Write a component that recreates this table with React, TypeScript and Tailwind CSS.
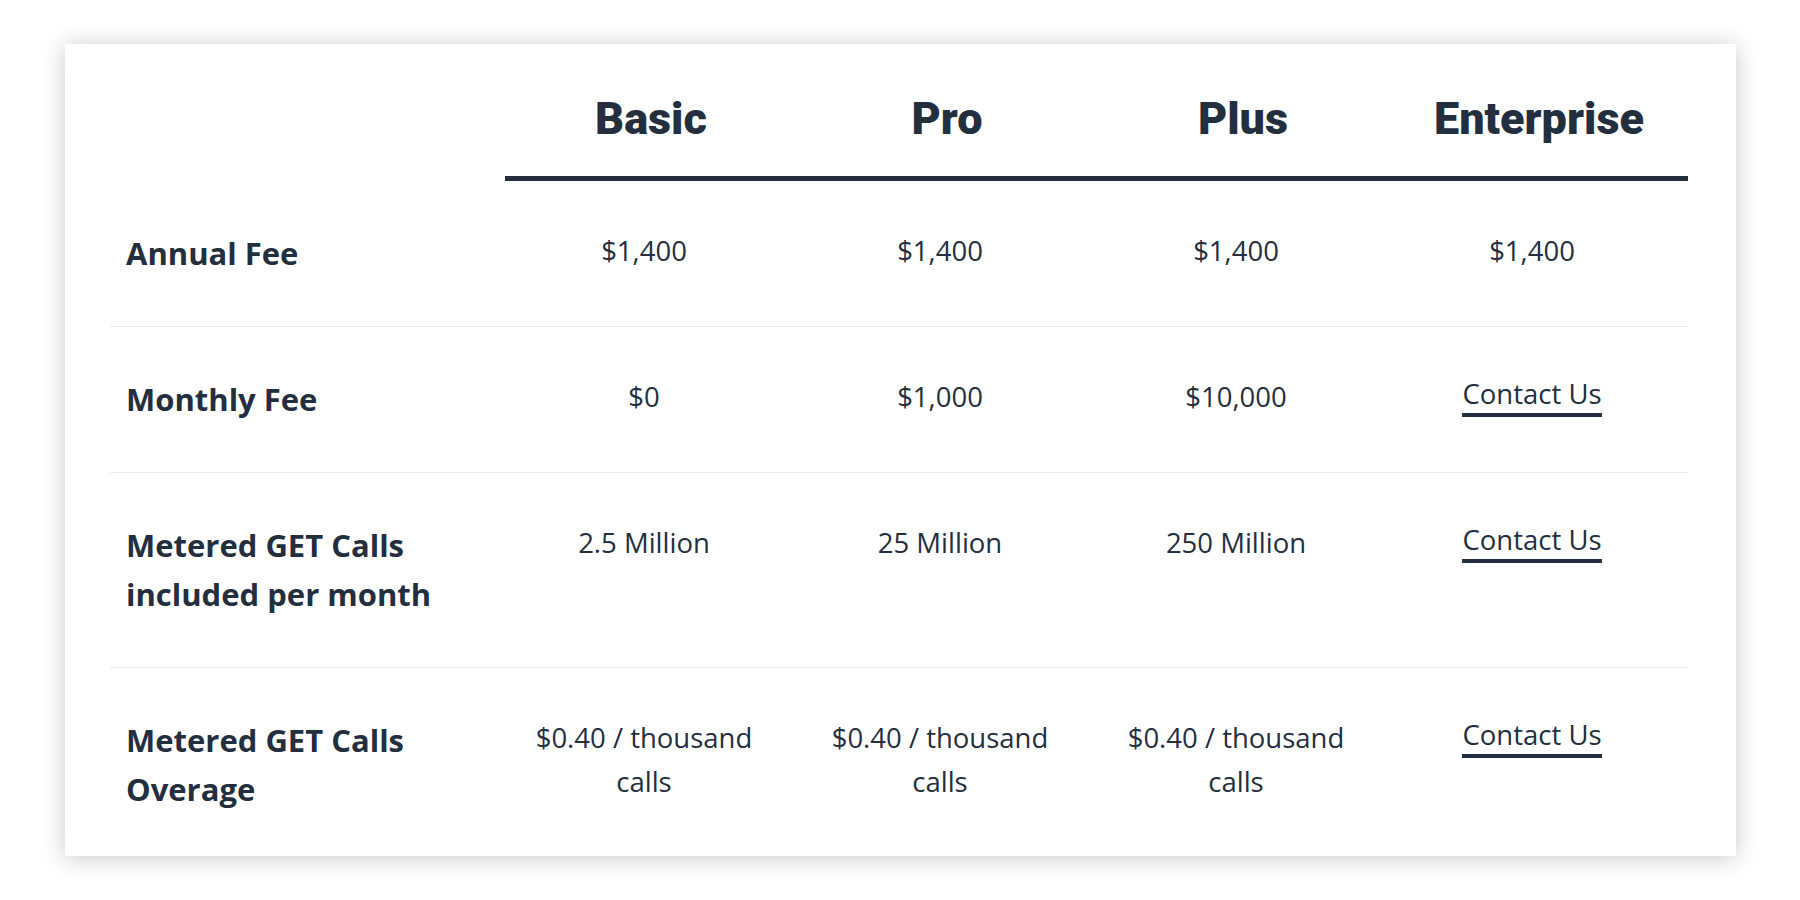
import React from "react";

type Cell = { text: string; link?: boolean };
type Row = { label: string; cells: Cell[] };

const plans = ["Basic", "Pro", "Plus", "Enterprise"];

const rows: Row[] = [
  {
    label: "Annual Fee",
    cells: [{ text: "$1,400" }, { text: "$1,400" }, { text: "$1,400" }, { text: "$1,400" }],
  },
  {
    label: "Monthly Fee",
    cells: [{ text: "$0" }, { text: "$1,000" }, { text: "$10,000" }, { text: "Contact Us", link: true }],
  },
  {
    label: "Metered GET Calls included per month",
    cells: [
      { text: "2.5 Million" },
      { text: "25 Million" },
      { text: "250 Million" },
      { text: "Contact Us", link: true },
    ],
  },
  {
    label: "Metered GET Calls Overage",
    cells: [
      { text: "$0.40 / thousand calls" },
      { text: "$0.40 / thousand calls" },
      { text: "$0.40 / thousand calls" },
      { text: "Contact Us", link: true },
    ],
  },
];

const ValueCell: React.FC<{ cell: Cell }> = ({ cell }) => (
  <div className="w-[296px] flex items-start justify-center">
    {cell.link ? (
      <a className="inline-block border-b-[4px] border-[#232f3e] leading-[38px] cursor-pointer">
        {cell.text}
      </a>
    ) : (
      <span className="max-w-[240px] text-center">{cell.text}</span>
    )}
  </div>
);

export default function App() {
  return (
    <div className="min-h-[900px] w-full bg-white font-['Open_Sans',sans-serif] text-[#232f3e]">
      <div className="pl-[65px] pt-[44px]">
        <div className="w-[1671px] bg-white pl-[45px] pr-[48px] pt-[48px] pb-[42px] shadow-[0_2px_22px_rgba(0,0,0,0.22)]">
          {/* plan header */}
          <div className="flex">
            <div className="w-[386px]" />
            {plans.map((plan) => (
              <div
                key={plan}
                className="w-[296px] pl-[14px] text-center font-['Roboto',sans-serif] text-[45px] font-black leading-[53px]"
              >
                {plan}
              </div>
            ))}
          </div>
          <div className="ml-[395px] mt-[31px] h-[5px] bg-[#232f3e]" />

          {rows.map((row, i) => (
            <div
              key={row.label}
              className={
                i === 0
                  ? "flex items-start pt-[48px] pb-[48px]"
                  : i === rows.length - 1
                  ? "flex items-start border-t border-[#ebebe8] pt-[48px]"
                  : "flex items-start border-t border-[#ebebe8] pt-[48px] pb-[48px]"
              }
            >
              <div className="w-[386px] pl-4">
                <div className="max-w-[340px] text-[31px] font-bold leading-[49px]">{row.label}</div>
              </div>
              <div className="flex text-[27.5px] leading-[44px]">
                {row.cells.map((cell, j) => (
                  <ValueCell key={j} cell={cell} />
                ))}
              </div>
            </div>
          ))}
        </div>
      </div>
    </div>
  );
}
